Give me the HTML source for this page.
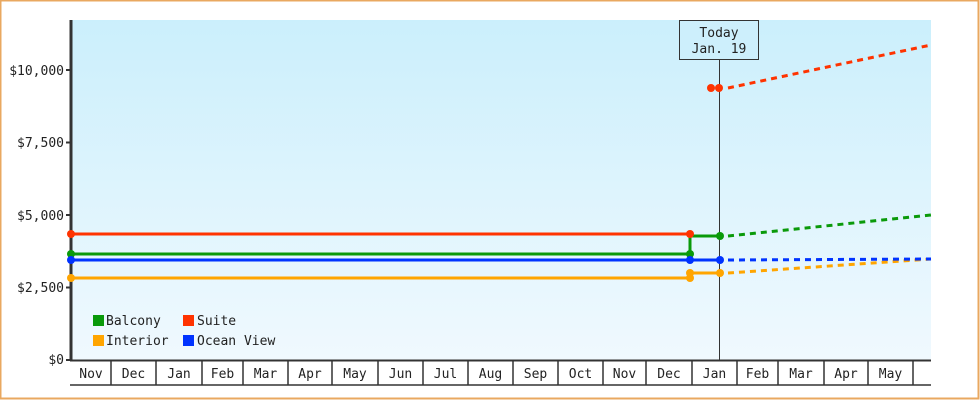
<!DOCTYPE html>
<html><head><style>
html,body{margin:0;padding:0;background:#fff}
svg{display:block}
text{font-family:"DejaVu Sans Mono","Liberation Mono",monospace;font-size:13px;fill:#222}
</style></head><body>
<svg width="980" height="400" viewBox="0 0 980 400" xmlns="http://www.w3.org/2000/svg">
<defs><linearGradient id="g" x1="0" y1="0" x2="0" y2="1"><stop offset="0" stop-color="#cbeffc"/><stop offset="1" stop-color="#f0f9fe"/></linearGradient></defs>
<rect x="0.5" y="0.5" width="978" height="398" fill="#fff" stroke="#e9a860" stroke-width="2"/>
<rect x="71" y="20" width="860" height="340" fill="url(#g)"/>
<line x1="71" y1="20" x2="71" y2="361" stroke="#333" stroke-width="3"/>
<g stroke="#333" stroke-width="2">
<line x1="66" y1="70" x2="71" y2="70"/><line x1="66" y1="142.5" x2="71" y2="142.5"/><line x1="66" y1="215" x2="71" y2="215"/><line x1="66" y1="287.5" x2="71" y2="287.5"/><line x1="66" y1="360" x2="71" y2="360"/>
</g>
<g text-anchor="end"><text x="64" y="75">$10,000</text><text x="64" y="147">$7,500</text><text x="64" y="220">$5,000</text><text x="64" y="292">$2,500</text><text x="64" y="364">$0</text></g>
<line x1="70" y1="360.5" x2="931" y2="360.5" stroke="#333" stroke-width="2"/>
<line x1="70" y1="385" x2="931" y2="385" stroke="#333" stroke-width="1.5"/>
<g stroke="#333" stroke-width="1.5">
<line x1="111" y1="360" x2="111" y2="385"/><line x1="156" y1="360" x2="156" y2="385"/><line x1="202" y1="360" x2="202" y2="385"/><line x1="243" y1="360" x2="243" y2="385"/><line x1="288" y1="360" x2="288" y2="385"/><line x1="332" y1="360" x2="332" y2="385"/><line x1="378" y1="360" x2="378" y2="385"/><line x1="423" y1="360" x2="423" y2="385"/><line x1="468" y1="360" x2="468" y2="385"/><line x1="513" y1="360" x2="513" y2="385"/><line x1="558" y1="360" x2="558" y2="385"/><line x1="603" y1="360" x2="603" y2="385"/><line x1="646" y1="360" x2="646" y2="385"/><line x1="692" y1="360" x2="692" y2="385"/><line x1="737" y1="360" x2="737" y2="385"/><line x1="778" y1="360" x2="778" y2="385"/><line x1="824" y1="360" x2="824" y2="385"/><line x1="868" y1="360" x2="868" y2="385"/><line x1="913" y1="360" x2="913" y2="385"/>
</g>
<g text-anchor="middle">
<text x="91" y="378">Nov</text><text x="133.5" y="378">Dec</text><text x="179" y="378">Jan</text><text x="222.5" y="378">Feb</text><text x="265.5" y="378">Mar</text><text x="310" y="378">Apr</text><text x="355" y="378">May</text><text x="400.5" y="378">Jun</text><text x="445.5" y="378">Jul</text><text x="490.5" y="378">Aug</text><text x="535.5" y="378">Sep</text><text x="580.5" y="378">Oct</text><text x="624.5" y="378">Nov</text><text x="669" y="378">Dec</text><text x="714.5" y="378">Jan</text><text x="757.5" y="378">Feb</text><text x="801" y="378">Mar</text><text x="846" y="378">Apr</text><text x="890.5" y="378">May</text>
</g>
<line x1="719.5" y1="60" x2="719.5" y2="360" stroke="#333" stroke-width="1"/>
<rect x="679.5" y="20.5" width="79" height="39" fill="#cdeffc" stroke="#333" stroke-width="1"/>
<text x="719" y="37" text-anchor="middle">Today</text><text x="719" y="53" text-anchor="middle">Jan. 19</text>
<g fill="none" stroke-width="3">
<polyline points="71,278 690,278 690,273 720,273" stroke="#ffa500"/>
<polyline points="71,254 690,254 690,236 720,236" stroke="#0a9a0a"/>
<polyline points="71,234 690,234" stroke="#ff3300"/>
<polyline points="71,260 720,260" stroke="#0033ff"/>
</g>
<g fill="none" stroke-width="3" stroke-dasharray="6,5">
<polyline points="728,273 931,259" stroke="#ffa500"/>
<polyline points="728,236 931,215" stroke="#0a9a0a"/>
<polyline points="728,260 931,259" stroke="#0033ff"/>
<polyline points="728,88 931,45" stroke="#ff3300"/>
</g>
<g>
<circle cx="71" cy="278" r="4" fill="#ffa500"/><circle cx="690" cy="278" r="4" fill="#ffa500"/><circle cx="690" cy="273" r="4" fill="#ffa500"/><circle cx="720" cy="273" r="4" fill="#ffa500"/>
<circle cx="71" cy="254" r="4" fill="#0a9a0a"/><circle cx="690" cy="254" r="4" fill="#0a9a0a"/><circle cx="720" cy="236" r="4" fill="#0a9a0a"/>
<circle cx="71" cy="260" r="4" fill="#0033ff"/><circle cx="690" cy="260" r="4" fill="#0033ff"/><circle cx="720" cy="260" r="4" fill="#0033ff"/>
<circle cx="71" cy="234" r="4" fill="#ff3300"/><circle cx="690" cy="234" r="4" fill="#ff3300"/>
<circle cx="711" cy="88" r="4" fill="#ff3300"/><circle cx="719" cy="88" r="4" fill="#ff3300"/>
</g>
<rect x="93" y="315" width="11" height="11" fill="#0a9a0a"/><text x="106" y="325">Balcony</text>
<rect x="183" y="315" width="11" height="11" fill="#ff3300"/><text x="197" y="325">Suite</text>
<rect x="93" y="335" width="11" height="11" fill="#ffa500"/><text x="106" y="345">Interior</text>
<rect x="183" y="335" width="11" height="11" fill="#0033ff"/><text x="197" y="345">Ocean View</text>
</svg>
</body></html>
